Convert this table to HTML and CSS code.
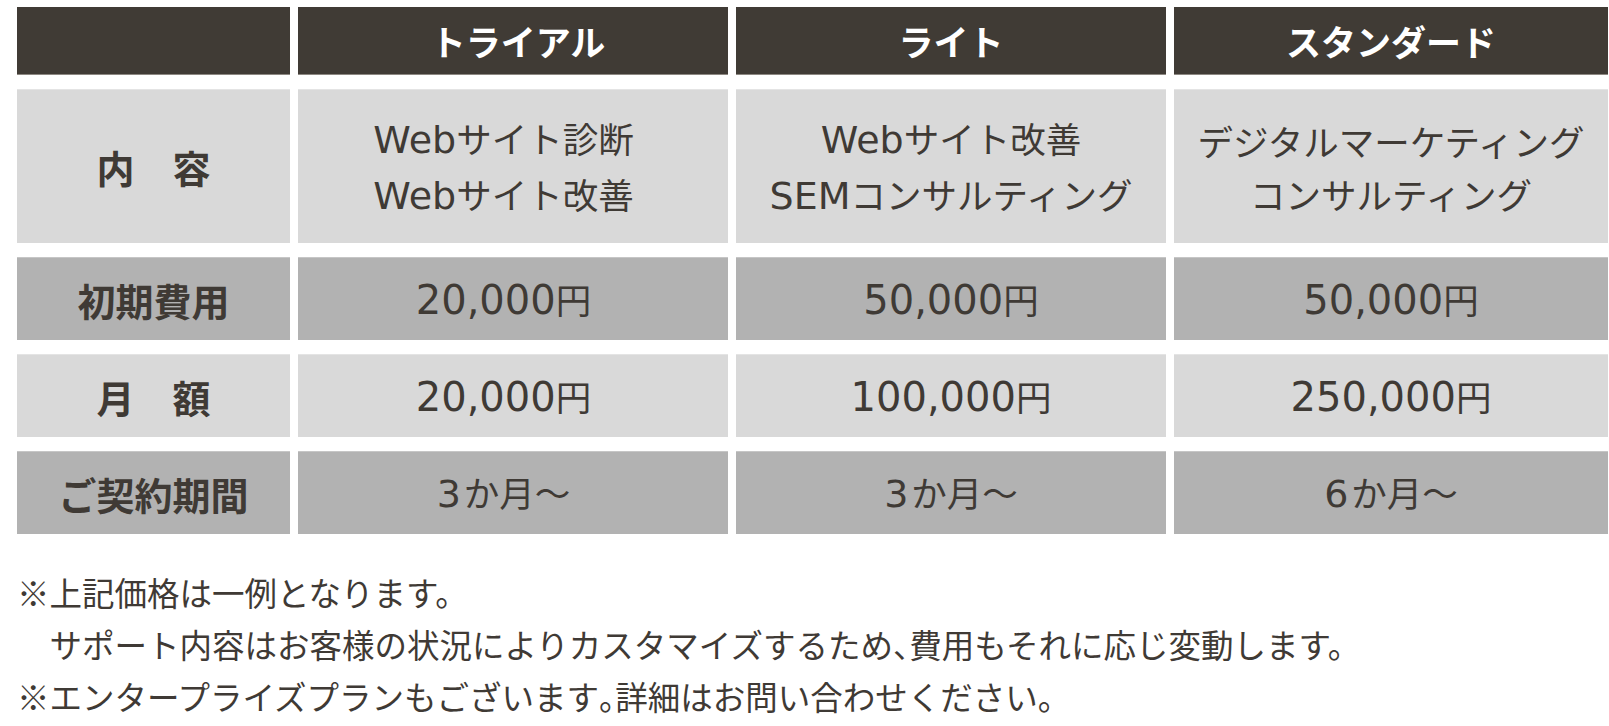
FILE: index.html
```html
<!DOCTYPE html>
<html lang="ja">
<head>
<meta charset="utf-8">
<link rel="stylesheet" href="styles.css">
</head>
<body>
<div class="page">
  <div class="price-table">
    <div class="cell head blank"></div>
    <div class="cell head c2">トライアル</div>
    <div class="cell head">ライト</div>
    <div class="cell head">スタンダード</div>

    <div class="cell label light">内　容</div>
    <div class="cell value light c2"><p class="txt"><span class="en">Web</span>サイト診断<br><span class="en">Web</span>サイト改善</p></div>
    <div class="cell value light"><p class="txt"><span class="en">Web</span>サイト改善<br><span class="en">SEM</span>コンサルティング</p></div>
    <div class="cell value light"><p class="txt">デジタルマーケティング<br>コンサルティング</p></div>

    <div class="cell label mid">初期費用</div>
    <div class="cell value mid c2"><p class="txt"><span class="num">20,000</span>円</p></div>
    <div class="cell value mid"><p class="txt"><span class="num">50,000</span>円</p></div>
    <div class="cell value mid"><p class="txt"><span class="num">50,000</span>円</p></div>

    <div class="cell label light">月　額</div>
    <div class="cell value light c2"><p class="txt"><span class="num">20,000</span>円</p></div>
    <div class="cell value light"><p class="txt"><span class="num">100,000</span>円</p></div>
    <div class="cell value light"><p class="txt"><span class="num">250,000</span>円</p></div>

    <div class="cell label mid">ご契約期間</div>
    <div class="cell value mid c2"><p class="txt"><span class="digit">3</span>か月～</p></div>
    <div class="cell value mid"><p class="txt"><span class="digit">3</span>か月～</p></div>
    <div class="cell value mid"><p class="txt"><span class="digit">6</span>か月～</p></div>
  </div>
  <div class="notes">
    <p>※上記価格は一例となります。</p>
    <p>　サポート内容はお客様の状況によりカスタマイズするため<span class="halt">、</span>費用もそれに応じ変動します。</p>
    <p>※エンタープライズプランもございます<span class="halt">。</span>詳細はお問い合わせください。</p>
  </div>
</div>
</body>
</html>
```
FILE: styles.css
```css
html, body {
  margin: 0;
  padding: 0;
  background: #ffffff;
}
body {
  font-family: "Noto Sans CJK JP", "Noto Sans", sans-serif;
  color: #3f3a35;
}
.page {
  padding: 7px 0 0 17px;
}
.price-table {
  display: grid;
  grid-template-columns: 273px 430px 430px 434px;
  grid-template-rows: 68px 154px 83px 83px 83px;
  column-gap: 8px;
  row-gap: 14px;
}
.cell {
  display: flex;
  align-items: center;
  justify-content: center;
  text-align: center;
  box-sizing: border-box;
}
.head {
  background: #403b35;
  color: #ffffff;
  font-weight: 700;
  font-size: 35px;
  border-bottom: 1px solid #8d8882;
}
.head.c2 {
  padding-left: 10px;
}
.light {
  background: #d9d9d9;
  border-top: 1px solid #e4e4e4;
}
.mid {
  background: #b2b2b2;
  border-top: 1px solid #c6c6c6;
}
.label {
  font-weight: 700;
  font-size: 38px;
}
.value {
  font-size: 35.5px;
  line-height: 53px;
}
.value.c2 {
  padding-right: 19px;
}
.txt {
  margin: 0;
  white-space: nowrap;
}
.value .en {
  font-family: "DejaVu Sans", "Noto Sans CJK JP", sans-serif;
  font-size: 38px;
}
.value .num {
  font-family: "DejaVu Sans", "Noto Sans CJK JP", sans-serif;
  font-size: 40px;
}
.value .digit {
  font-family: "DejaVu Sans", "Noto Sans CJK JP", sans-serif;
  font-size: 38px;
  margin-right: 3px;
}
.notes {
  margin-top: 32px;
  font-size: 32.5px;
  line-height: 52px;
}
.notes p {
  margin: 0;
}
.halt {
  font-feature-settings: "halt";
}
```
